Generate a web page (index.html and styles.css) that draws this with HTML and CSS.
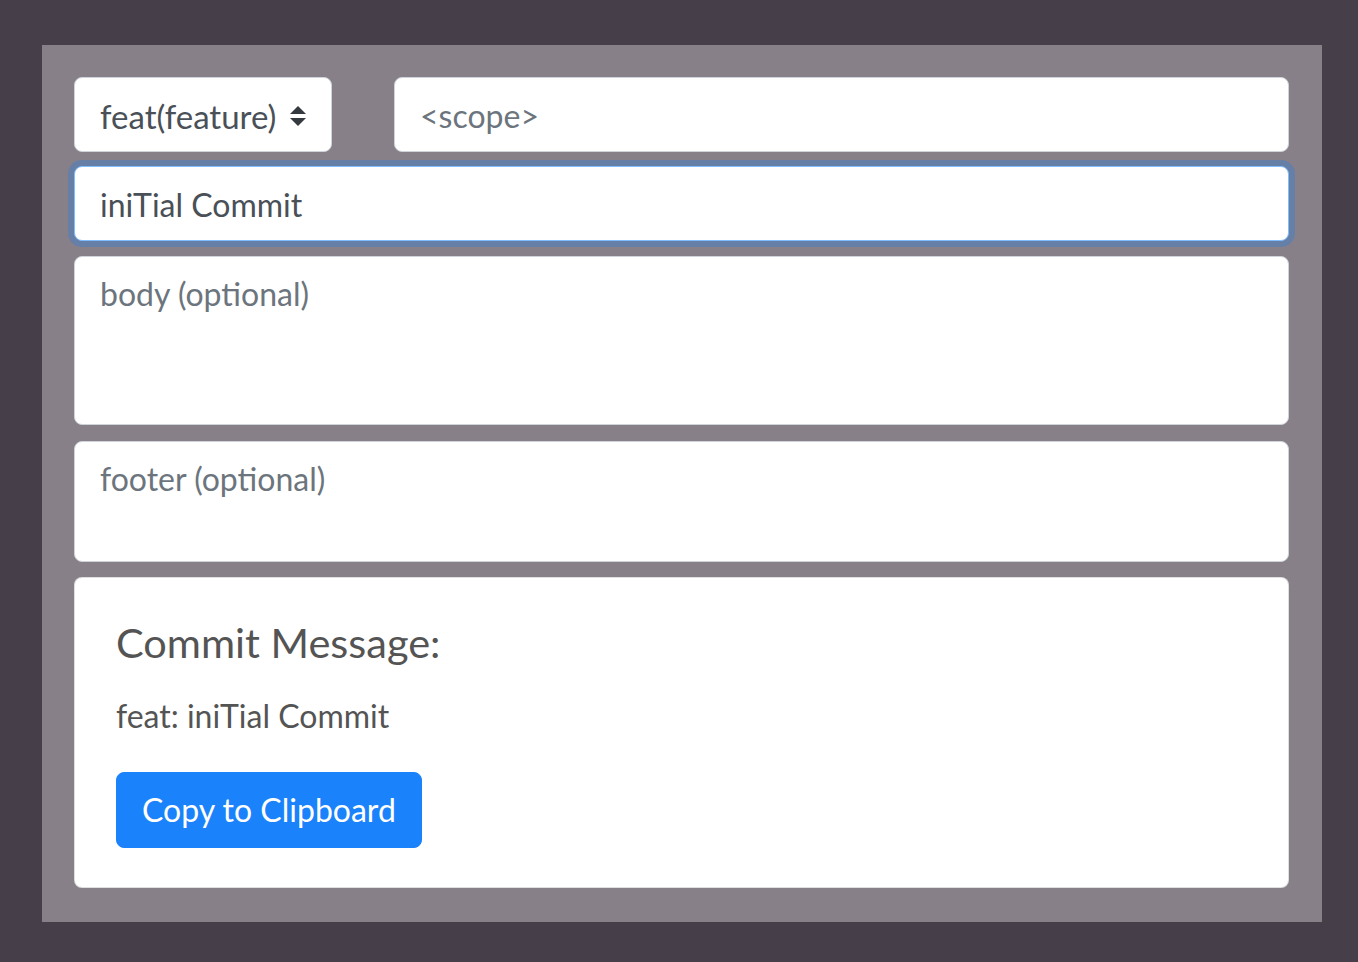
FILE: index.html
```html
<!DOCTYPE html>
<html lang="en">
<head>
<meta charset="utf-8">
<title>Commit Message</title>
<link rel="stylesheet" href="styles.css">
</head>
<body>
<div class="panel">
  <div class="row-top">
    <div class="select">
      <span class="select-text">feat(feature)</span>
      <svg class="select-arrows" width="16" height="20" viewBox="0 0 4 5" aria-hidden="true"><path d="M2 0L0 2h4zm0 5L0 3h4z" fill="#343a40"/></svg>
    </div>
    <div class="field scope"><span class="placeholder">&lt;scope&gt;</span></div>
  </div>
  <div class="field subject focused"><span class="value">iniTial Commit</span></div>
  <div class="field body-area"><span class="placeholder">body (optional)</span></div>
  <div class="field footer-area"><span class="placeholder">footer (optional)</span></div>
  <div class="card">
    <h5 class="card-title">Commit Message:</h5>
    <p class="card-text">feat: iniTial Commit</p>
    <button class="btn">Copy to Clipboard</button>
  </div>
</div>
</body>
</html>
```
FILE: styles.css
```css
* { box-sizing: border-box; }
html, body { margin: 0; padding: 0; }
body {
  background: #463f4a;
  font-family: Lato, "Liberation Sans", sans-serif;
  width: 1358px;
  height: 962px;
  padding: 45px 36px 40px 42px;
}
.panel {
  background: #888089;
  width: 1280px;
  height: 877px;
  padding: 32px 33px 34px 32px;
  display: flex;
  flex-direction: column;
}
.row-top {
  display: flex;
  gap: 62px;
  height: 75px;
  margin-bottom: 14px;
}
.select {
  width: 258px;
  height: 75px;
  background: #fff;
  border: 1px solid #ced4da;
  border-radius: 8px;
  display: flex;
  align-items: center;
  padding: 2px 25px 0 25px;
  justify-content: space-between;
  font-size: 33px;
  color: #495057;
}
.select-text { line-height: 48px; }
.select-arrows { display: block; margin-top: 0; }
.field {
  background: #fff;
  border: 1px solid #ced4da;
  border-radius: 8px;
  font-size: 32px;
  line-height: 48px;
  padding: 13px 25px 11px;
  color: #495057;
}
.scope { flex: 1; height: 75px; padding-left: 25px; padding-top: 14px; }
.placeholder { color: #6c757d; }
.subject { height: 75px; margin-bottom: 15px; padding-top: 14px; }
.focused {
  border-color: #80bdff;
  box-shadow: 0 0 0 6px rgba(0, 123, 255, 0.25);
}
.body-area { height: 169px; margin-bottom: 16px; }
.footer-area { height: 121px; margin-bottom: 15px; }
.card {
  background: #fff;
  border: 1px solid rgba(0, 0, 0, 0.125);
  border-radius: 8px;
  height: 311px;
  padding: 40px 41px;
}
.card-title {
  margin: 0 0 26px;
  font-size: 41.5px;
  line-height: 48px;
  font-weight: 400;
  color: #545454;
}
.card-text {
  margin: 0 0 32px;
  font-size: 32px;
  line-height: 48px;
  color: #545454;
}
.btn {
  display: block;
  height: 76px;
  padding: 0 25px;
  background: #1a82fb;
  border: 1px solid #1a82fb;
  border-radius: 8px;
  color: #fff;
  font-family: Lato, "Liberation Sans", sans-serif;
  font-size: 32px;
  line-height: 48px;
  cursor: pointer;
}
```
